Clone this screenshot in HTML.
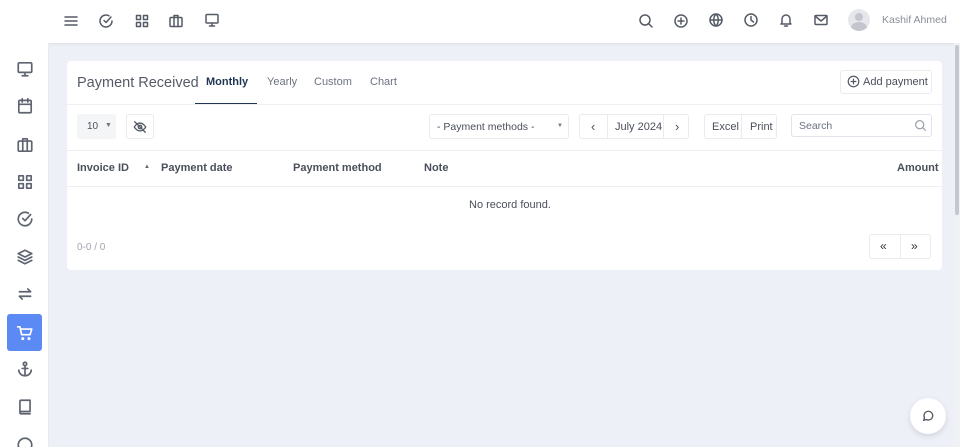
<!DOCTYPE html>
<html><head><meta charset="utf-8"><style>
*{box-sizing:border-box;margin:0;padding:0}
html,body{width:960px;height:447px;overflow:hidden}
body{background:#eef0f8;font-family:"Liberation Sans",sans-serif;color:#4a4f5a;position:relative}
.top{position:absolute;left:0;top:0;width:960px;height:43px;background:#fff;box-shadow:0 1px 3px rgba(0,0,0,.08)}
.side{position:absolute;left:0;top:43px;width:49px;height:404px;background:#fff;border-right:1px solid #e8eaf0}
svg.i{position:absolute;width:16px;height:16px;fill:none;stroke:#555b66;stroke-width:1.5;stroke-linecap:round;stroke-linejoin:round}
.side svg.i{width:18px;height:18px;left:16px;stroke:#5f6570}
.card{position:absolute;left:67px;top:61px;width:875px;height:209px;background:#fff;border-radius:4px}
.t{position:absolute;font-size:12px;white-space:nowrap}
.box{position:absolute;border:1px solid #e9ebef;border-radius:3px;background:#fff}
.line{position:absolute;left:0;width:875px;height:1px;background:#eef0f3}
</style></head><body>
<div class="top">
<svg class="i" style="left:63px;top:13px" viewBox="0 0 16 16"><path d="M2 4h12M2 8h12M2 12h12"/></svg>
<svg class="i" style="left:98px;top:13px" viewBox="0 0 16 16"><path d="M14 8a6 6 0 1 1-3-5.2M6 7.5l2 2 5-5.5"/></svg>
<svg class="i" style="left:134px;top:13px" viewBox="0 0 16 16"><rect x="2.5" y="2.5" width="4" height="4"/><rect x="9.5" y="2.5" width="4" height="4"/><rect x="2.5" y="9.5" width="4" height="4"/><rect x="9.5" y="9.5" width="4" height="4"/></svg>
<svg class="i" style="left:168px;top:13px" viewBox="0 0 16 16"><rect x="2" y="4.5" width="12" height="9" rx="1"/><path d="M6 4.5V2.5h4v2M6 4.5v9M10 4.5v9"/></svg>
<svg class="i" style="left:204px;top:12px" viewBox="0 0 16 16"><rect x="2" y="2.5" width="12" height="8.5" rx="1"/><path d="M8 11v3M5.5 14h5"/></svg>
<svg class="i" style="left:638px;top:13px" viewBox="0 0 16 16"><circle cx="7" cy="7" r="5"/><path d="M11 11l3 3"/></svg>
<svg class="i" style="left:673px;top:13px" viewBox="0 0 16 16"><circle cx="8" cy="8" r="6"/><path d="M8 5v6M5 8h6"/></svg>
<svg class="i" style="left:708px;top:12px" viewBox="0 0 16 16"><circle cx="8" cy="8" r="6"/><path d="M2 8h12M8 2c-3 3-3 9 0 12M8 2c3 3 3 9 0 12"/></svg>
<svg class="i" style="left:743px;top:12px" viewBox="0 0 16 16"><circle cx="8" cy="8" r="6"/><path d="M8 4.5V8l2.5 2"/></svg>
<svg class="i" style="left:778px;top:12px" viewBox="0 0 16 16"><path d="M4 11V7a4 4 0 0 1 8 0v4l1 1H3zM6.5 14h3"/></svg>
<svg class="i" style="left:813px;top:12px" viewBox="0 0 16 16"><rect x="2" y="3.5" width="12" height="9" rx="1"/><path d="M2 4l6 5 6-5"/></svg>
<div style="position:absolute;left:848px;top:9px;width:22px;height:22px;border-radius:50%;background:#e6e7ea;overflow:hidden"><div style="position:absolute;left:7px;top:4px;width:8px;height:8px;border-radius:50%;background:#c3c6cc"></div><div style="position:absolute;left:3px;top:13px;width:16px;height:12px;border-radius:50%;background:#c3c6cc"></div></div>
<div class="t" style="left:882px;top:14px;font-size:10.5px;color:#8a8f99">Kashif Ahmed</div>
</div>
<div class="side">
<svg class="i" style="top:17px" viewBox="0 0 16 16"><rect x="2" y="2.5" width="12" height="8.5" rx="1"/><path d="M8 11v3M5.5 14h5"/></svg>
<svg class="i" style="top:54px" viewBox="0 0 16 16"><rect x="2.5" y="3" width="11" height="11" rx="1"/><path d="M2.5 6.5h11M5.5 1.5v3M10.5 1.5v3"/></svg>
<svg class="i" style="top:93px" viewBox="0 0 16 16"><rect x="2" y="4.5" width="12" height="9" rx="1"/><path d="M6 4.5V2.5h4v2M6 4.5v9M10 4.5v9"/></svg>
<svg class="i" style="top:130px" viewBox="0 0 16 16"><rect x="2.5" y="2.5" width="4" height="4"/><rect x="9.5" y="2.5" width="4" height="4"/><rect x="2.5" y="9.5" width="4" height="4"/><rect x="9.5" y="9.5" width="4" height="4"/></svg>
<svg class="i" style="top:167px" viewBox="0 0 16 16"><path d="M14 8a6 6 0 1 1-3-5.2M6 7.5l2 2 5-5.5"/></svg>
<svg class="i" style="top:205px" viewBox="0 0 16 16"><path d="M8 2l6 3-6 3-6-3zM2 8l6 3 6-3M2 11l6 3 6-3"/></svg>
<svg class="i" style="top:242px" viewBox="0 0 16 16"><path d="M3 6h10l-2.5-2.5M13 10H3l2.5 2.5"/></svg>
<div style="position:absolute;left:7px;top:271px;width:35px;height:37px;background:#5b8af5;border-radius:3px"></div>
<svg class="i" style="top:281px;stroke:#fff" viewBox="0 0 16 16"><path d="M1.5 2.5h2l1.5 7h7.5l1.5-5H4.2"/><circle cx="6" cy="13" r=".6"/><circle cx="11.5" cy="13" r=".6"/></svg>
<svg class="i" style="top:317px" viewBox="0 0 16 16"><circle cx="8" cy="3.5" r="1.5"/><path d="M8 5v9M2.5 9a5.5 5 0 0 0 11 0M5.5 7.5h5"/></svg>
<svg class="i" style="top:355px" viewBox="0 0 16 16"><path d="M3.5 13V3a1 1 0 0 1 1-1h8v10h-8a1 1 0 0 0 0 2h8"/></svg>
<svg class="i" style="top:393px" viewBox="0 0 16 16"><circle cx="8" cy="8" r="6"/></svg>
</div>
<div class="card">
<div class="t" style="left:10px;top:14px;font-size:14.5px;color:#555b66">Payment Received</div>
<div class="t" style="left:139px;top:15px;font-weight:bold;color:#1f3553;font-size:11px">Monthly</div>
<div style="position:absolute;left:128px;top:42px;width:62px;height:2px;background:#1f3553"></div>
<div class="t" style="left:200px;top:15px;font-size:11px;color:#6b7280">Yearly</div>
<div class="t" style="left:247px;top:15px;font-size:11px;color:#6b7280">Custom</div>
<div class="t" style="left:303px;top:15px;font-size:11px;color:#6b7280">Chart</div>
<div class="box" style="left:773px;top:9px;width:92px;height:24px"></div>
<svg class="i" style="left:780px;top:14px;width:13px;height:13px" viewBox="0 0 16 16"><circle cx="8" cy="8" r="6.5"/><path d="M8 5v6M5 8h6"/></svg>
<div class="t" style="left:796px;top:15px;font-size:11px">Add payment</div>
<div class="line" style="top:43px"></div>
<div style="position:absolute;left:10px;top:53px;width:39px;height:25px;background:#f4f5f7;border-radius:2px"></div>
<div class="t" style="left:20px;top:60px;font-size:10px">10</div>
<div class="t" style="left:38px;top:61px;font-size:7px;color:#777">▼</div>
<div class="box" style="left:59px;top:53px;width:28px;height:25px"></div>
<svg class="i" style="left:66px;top:59px;width:14px;height:14px" viewBox="0 0 16 16"><path d="M1.5 8s2.5-4.5 6.5-4.5S14.5 8 14.5 8 12 12.5 8 12.5 1.5 8 1.5 8z"/><circle cx="8" cy="8" r="2"/><path d="M2 2l12 12"/></svg>
<div class="box" style="left:362px;top:53px;width:140px;height:25px"></div>
<div class="t" style="left:370px;top:60px;font-size:10.5px">- Payment methods -</div>
<div class="t" style="left:490px;top:62px;font-size:6px;color:#777">▼</div>
<div class="box" style="left:512px;top:53px;width:110px;height:25px"></div>
<div style="position:absolute;left:540px;top:54px;width:1px;height:23px;background:#e9ebef"></div>
<div style="position:absolute;left:596px;top:54px;width:1px;height:23px;background:#e9ebef"></div>
<div class="t" style="left:524px;top:58px;font-size:13px">‹</div>
<div class="t" style="left:548px;top:60px;font-size:11px">July 2024</div>
<div class="t" style="left:608px;top:58px;font-size:13px">›</div>
<div class="box" style="left:637px;top:53px;width:73px;height:25px"></div>
<div style="position:absolute;left:674px;top:54px;width:1px;height:23px;background:#e9ebef"></div>
<div class="t" style="left:645px;top:60px;font-size:11px">Excel</div>
<div class="t" style="left:683px;top:60px;font-size:11px">Print</div>
<div class="box" style="left:724px;top:53px;width:141px;height:23px;border-color:#e1e4ea"></div>
<div class="t" style="left:732px;top:59px;font-size:10.5px;color:#6b7280">Search</div>
<svg class="i" style="left:847px;top:58px;width:13px;height:13px;stroke:#9aa0aa" viewBox="0 0 16 16"><circle cx="7" cy="7" r="5"/><path d="M11 11l3 3"/></svg>
<div class="line" style="top:89px"></div>
<div class="t" style="left:10px;top:101px;font-weight:bold;font-size:11px">Invoice ID</div>
<div class="t" style="left:77px;top:103px;font-size:6px;color:#666">▲</div>
<div class="t" style="left:94px;top:101px;font-weight:bold;font-size:11px">Payment date</div>
<div class="t" style="left:226px;top:101px;font-weight:bold;font-size:11px">Payment method</div>
<div class="t" style="left:357px;top:101px;font-weight:bold;font-size:11px">Note</div>
<div class="t" style="left:830px;top:101px;font-weight:bold;font-size:11px">Amount</div>
<div class="line" style="top:125px"></div>
<div class="t" style="left:402px;top:138px;font-size:11px">No record found.</div>
<div class="t" style="left:10px;top:181px;font-size:10px;color:#a0a4ad">0-0 / 0</div>
<div class="box" style="left:802px;top:173px;width:62px;height:25px"></div>
<div style="position:absolute;left:833px;top:174px;width:1px;height:23px;background:#e9ebef"></div>
<div class="t" style="left:813px;top:178px;font-size:12px;color:#333">«</div>
<div class="t" style="left:844px;top:178px;font-size:12px;color:#333">»</div>
</div>
<div style="position:absolute;left:954px;top:43px;width:6px;height:404px;background:#f0f1f4"></div>
<div style="position:absolute;left:955px;top:45px;width:4px;height:170px;background:#c4c7cc;border-radius:2px"></div>
<div style="position:absolute;left:910px;top:398px;width:36px;height:36px;border-radius:50%;background:#fff;box-shadow:0 2px 6px rgba(0,0,0,.12)"></div>
<svg class="i" style="left:921px;top:409px;width:14px;height:14px" viewBox="0 0 16 16"><path d="M3 13l1-3a5 5 0 1 1 2 2z"/></svg>
</body></html>
